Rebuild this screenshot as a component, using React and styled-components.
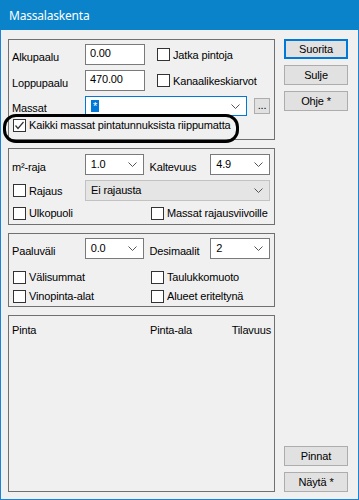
import React from 'react'
import styled, { createGlobalStyle } from 'styled-components'

const GlobalStyle = createGlobalStyle`
  * { margin: 0; padding: 0; box-sizing: border-box; }
  body { margin: 0; background: #f0f0f0; font-family: "Liberation Sans", Arial, sans-serif; font-size: 11px; letter-spacing: -0.15px; color: #000; }
`

const Win = styled.div`
  width: 359px;
  height: 500px;
  display: flex;
  flex-direction: column;
  background: #f0f0f0;
  border: 1px solid #1883d7;
  border-top: none;
`

const TitleBar = styled.div`
  height: 30px;
  background: #0a83cb;
  color: #fff;
  font-family: "Noto Sans", "Liberation Sans", sans-serif;
  font-size: 12px;
  letter-spacing: -0.2px;
  display: flex;
  align-items: center;
  padding-left: 9px;
  margin: 0 -1px;
`

const Body = styled.div`
  flex: 1;
  display: flex;
  gap: 9px;
  padding: 9px 10px 7px 7px;
`

const LeftCol = styled.div`
  width: 267px;
  display: flex;
  flex-direction: column;
  gap: 8px;
`

const RightCol = styled.div`
  flex: 1;
  display: flex;
  flex-direction: column;
  gap: 6px;
`

const Spacer = styled.div`
  flex: 1;
`

const Button = styled.button`
  width: 64px;
  height: 20px;
  font-family: inherit;
  font-size: 11px;
  letter-spacing: inherit;
  color: #000;
  background: #e1e1e1;
  border: 1px solid ${p => (p.$default ? '#0078d7' : '#adadad')};
  box-shadow: ${p => (p.$default ? 'inset 0 0 0 1px #0078d7' : 'none')};
  display: flex;
  align-items: center;
  justify-content: center;
`

const Panel = styled.div`
  position: relative;
  border: 1px solid #707070;
  padding: ${p => p.$pad || '4px 4px 6px 3px'};
  display: flex;
  flex-direction: column;
  gap: ${p => p.$gap || '5px'};
  flex: ${p => (p.$grow ? 1 : 'none')};
`

const Row = styled.div`
  display: flex;
  align-items: center;
  height: ${p => p.$h || 21}px;
  margin-top: ${p => p.$mt || 0}px;
  position: relative;
`

const Label = styled.span`
  width: ${p => p.$w || 73}px;
  margin-left: ${p => p.$ml || 0}px;
  align-self: flex-end;
  line-height: 14px;
  padding-bottom: 1px;
  white-space: nowrap;
`

const Cell = styled.div`
  width: ${p => p.$w || 73}px;
  flex: none;
`

const Input = styled.div`
  width: 60px;
  height: 21px;
  background: #fff;
  border: 1px solid #7a7a7a;
  padding: 0 4px;
  line-height: 17px;
`

const SelectBox = styled.div`
  width: ${p => p.$w || 60}px;
  height: ${p => p.$h || 21}px;
  background: ${p => (p.$disabled ? '#e5e5e5' : '#fff')};
  border: 1px solid ${p => (p.$focus ? '#0078d7' : p.$disabled ? '#c2c2c2' : '#7a7a7a')};
  display: flex;
  align-items: center;
  justify-content: space-between;
  padding: 0 6px 0 5px;
  line-height: 14px;
`

const SelText = styled.span`
  align-self: flex-start;
  padding-top: 2px;
`

const Highlighted = styled.span`
  background: #0078d7;
  color: #fff;
  padding: 0 2px;
  line-height: 13px;
`

const DotsButton = styled.div`
  width: 16px;
  height: 16px;
  margin-left: 7px;
  background: #e1e1e1;
  border: 1px solid #adadad;
  display: flex;
  align-items: flex-end;
  justify-content: center;
  line-height: 12px;
  padding-bottom: 2px;
  font-size: 11px;
`

const Check = styled.label`
  display: flex;
  align-items: center;
  gap: 3px;
  margin-left: ${p => p.$ml || 0}px;
  white-space: nowrap;
  line-height: 14px;
`

const Box = styled.span`
  width: 13px;
  height: 13px;
  background: #fff;
  border: 1px solid #333;
  display: flex;
  align-items: center;
  justify-content: center;
  flex: none;
`

const Outline = styled.span`
  position: absolute;
  left: -9px;
  top: -4px;
  width: 236px;
  height: 29px;
  border: 3px solid #000;
  border-radius: 13px;
  pointer-events: none;
`

const Header = styled.div`
  display: grid;
  grid-template-columns: 138px 1fr auto;
  padding: 7px 0 0 0;
  line-height: 14px;
`

const Chevron = () => (
  <svg width="9" height="5" viewBox="0 0 9 5">
    <polyline points="0.5,0.5 4.5,4.5 8.5,0.5" fill="none" stroke="#555" strokeWidth="1" />
  </svg>
)

const CheckBox = ({ checked, children, ml }) => (
  <Check $ml={ml}>
    <Box>
      {checked && (
        <svg width="11" height="11" viewBox="0 0 11 11">
          <polyline points="1.5,5.5 4,8.5 9.5,2" fill="none" stroke="#333" strokeWidth="1.2" />
        </svg>
      )}
    </Box>
    <span>{children}</span>
  </Check>
)

const Select = ({ value, w, focus, disabled, h, children }) => (
  <SelectBox $w={w} $focus={focus} $disabled={disabled} $h={h}>
    <SelText>{children || value}</SelText>
    <Chevron />
  </SelectBox>
)

export default function App() {
  return (
    <>
      <GlobalStyle />
      <Win>
        <TitleBar>Massalaskenta</TitleBar>
        <Body>
          <LeftCol>
            <Panel $pad="4px 4px 7px 3px">
              <Row>
                <Label>Alkupaalu</Label>
                <Input>0.00</Input>
                <CheckBox ml={12}>Jatka pintoja</CheckBox>
              </Row>
              <Row>
                <Label>Loppupaalu</Label>
                <Input>470.00</Input>
                <CheckBox ml={12}>Kanaalikeskiarvot</CheckBox>
              </Row>
              <Row $h={20}>
                <Label>Massat</Label>
                <Select w={162} h={20} focus>
                  <Highlighted>*</Highlighted>
                </Select>
                <DotsButton>...</DotsButton>
              </Row>
              <Row $h={14} $mt={-3}>
                <Outline />
                <CheckBox checked ml={1}>Kaikki massat pintatunnuksista riippumatta</CheckBox>
              </Row>
            </Panel>

            <Panel $pad="5px 4px 4px 3px">
              <Row>
                <Label>m²-raja</Label>
                <Select value="1.0" />
                <Label $w={61} $ml={5}>Kaltevuus</Label>
                <Select value="4.9" />
              </Row>
              <Row>
                <Cell>
                  <CheckBox ml={1}>Rajaus</CheckBox>
                </Cell>
                <Select value="Ei rajausta" w={185} disabled />
              </Row>
              <Row $h={14}>
                <Cell $w={139}>
                  <CheckBox ml={1}>Ulkopuoli</CheckBox>
                </Cell>
                <CheckBox>Massat rajausviivoille</CheckBox>
              </Row>
            </Panel>

            <Panel $pad="4px 4px 3px 3px">
              <Row>
                <Label>Paaluväli</Label>
                <Select value="0.0" />
                <Label $w={61} $ml={5}>Desimaalit</Label>
                <Select value="2" />
              </Row>
              <Row $h={14} $mt={6}>
                <Cell $w={139}>
                  <CheckBox ml={1}>Välisummat</CheckBox>
                </Cell>
                <CheckBox>Taulukkomuoto</CheckBox>
              </Row>
              <Row $h={14}>
                <Cell $w={139}>
                  <CheckBox ml={1}>Vinopinta-alat</CheckBox>
                </Cell>
                <CheckBox>Alueet eriteltynä</CheckBox>
              </Row>
            </Panel>

            <Panel $grow $pad="0 3px 0 3px">
              <Header>
                <span>Pinta</span>
                <span>Pinta-ala</span>
                <span>Tilavuus</span>
              </Header>
            </Panel>
          </LeftCol>

          <RightCol>
            <Button $default>Suorita</Button>
            <Button>Sulje</Button>
            <Button>Ohje *</Button>
            <Spacer />
            <Button>Pinnat</Button>
            <Button>Näytä *</Button>
          </RightCol>
        </Body>
      </Win>
    </>
  )
}
